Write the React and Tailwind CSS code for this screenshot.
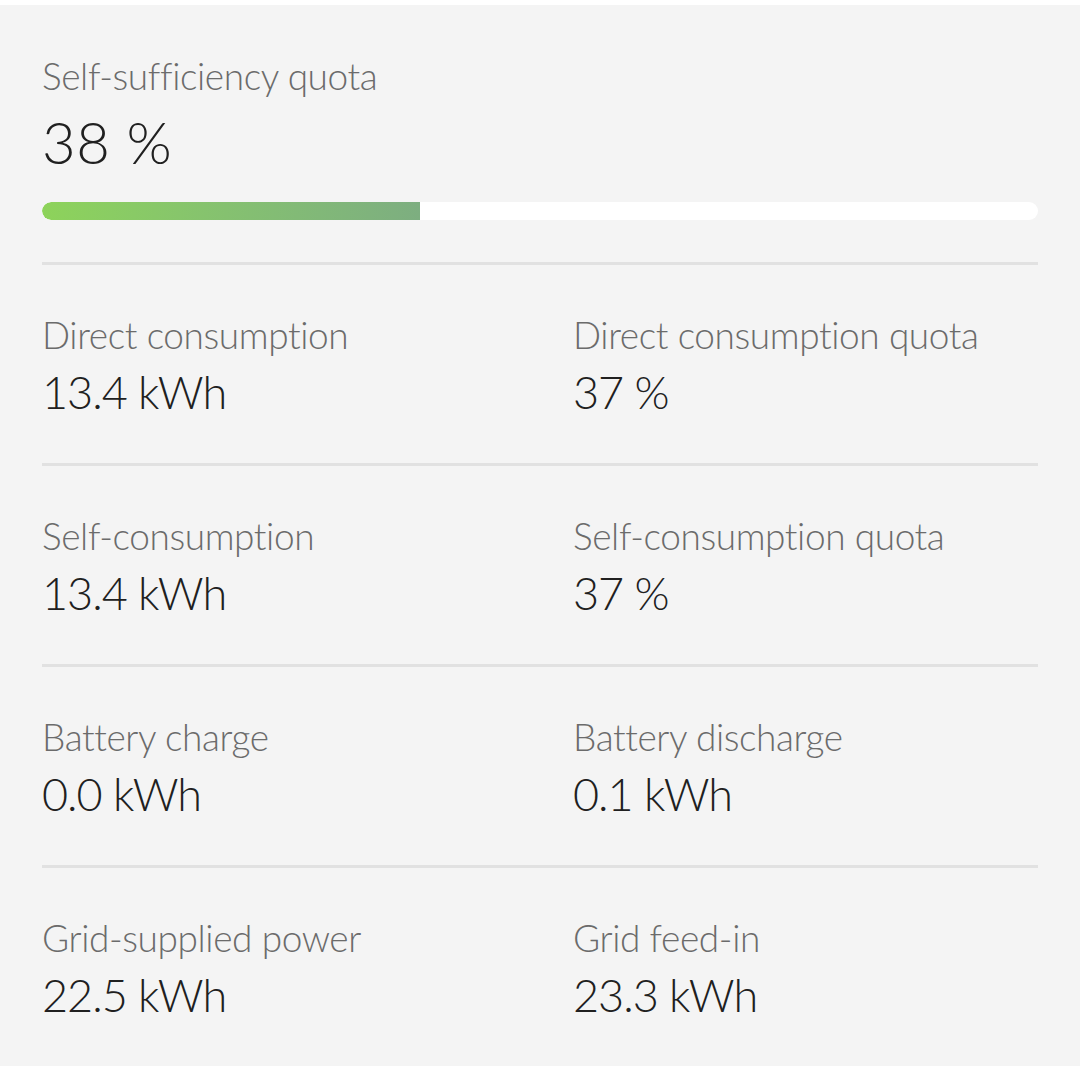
const rows = [
  [
    { label: "Direct consumption", value: "13.4 kWh" },
    { label: "Direct consumption quota", value: "37 %" },
  ],
  [
    { label: "Self-consumption", value: "13.4 kWh" },
    { label: "Self-consumption quota", value: "37 %" },
  ],
  [
    { label: "Battery charge", value: "0.0 kWh" },
    { label: "Battery discharge", value: "0.1 kWh" },
  ],
  [
    { label: "Grid-supplied power", value: "22.5 kWh" },
    { label: "Grid feed-in", value: "23.3 kWh" },
  ],
];

function Stat({ label, value }) {
  return (
    <div className="flex flex-col">
      <div className="text-[37px] leading-[38px] tracking-[-0.4px] text-[#6b6b6b]">
        {label}
      </div>
      <div className="mt-[16.5px] text-[45px] leading-[45px] tracking-[-1px] text-[#202020]">
        {value}
      </div>
    </div>
  );
}

export default function App() {
  const quota = 38;

  return (
    <div className="min-h-[1080px] bg-white pt-[5px] font-['Lato',sans-serif] font-light">
      <div className="h-[1061px] bg-[#f4f4f4] px-[42px] pt-[51.5px]">
        <div className="text-[37px] leading-[38px] tracking-[-0.4px] text-[#6b6b6b]">
          Self-sufficiency quota
        </div>
        <div className="mt-[18.5px] text-[58px] leading-[58px] tracking-[0.5px] text-[#202020]">
          {quota} %
        </div>
        <div className="mt-[31px] h-[18px] w-full overflow-hidden rounded-full bg-white">
          <div
            className="h-full rounded-l-full bg-gradient-to-r from-[#8dd35a] to-[#7dae80]"
            style={{ width: `${quota}%` }}
          />
        </div>
        <div className="mt-[42px] h-[3px] bg-[#e1e1e1]" />

        {rows.map((pair, i) => (
          <div key={i}>
            <div className="mt-[50.5px] grid grid-cols-[531px_1fr]">
              <Stat {...pair[0]} />
              <Stat {...pair[1]} />
            </div>
            {i < rows.length - 1 && (
              <div className="mt-[48px] h-[3px] bg-[#e1e1e1]" />
            )}
          </div>
        ))}
      </div>
    </div>
  );
}
